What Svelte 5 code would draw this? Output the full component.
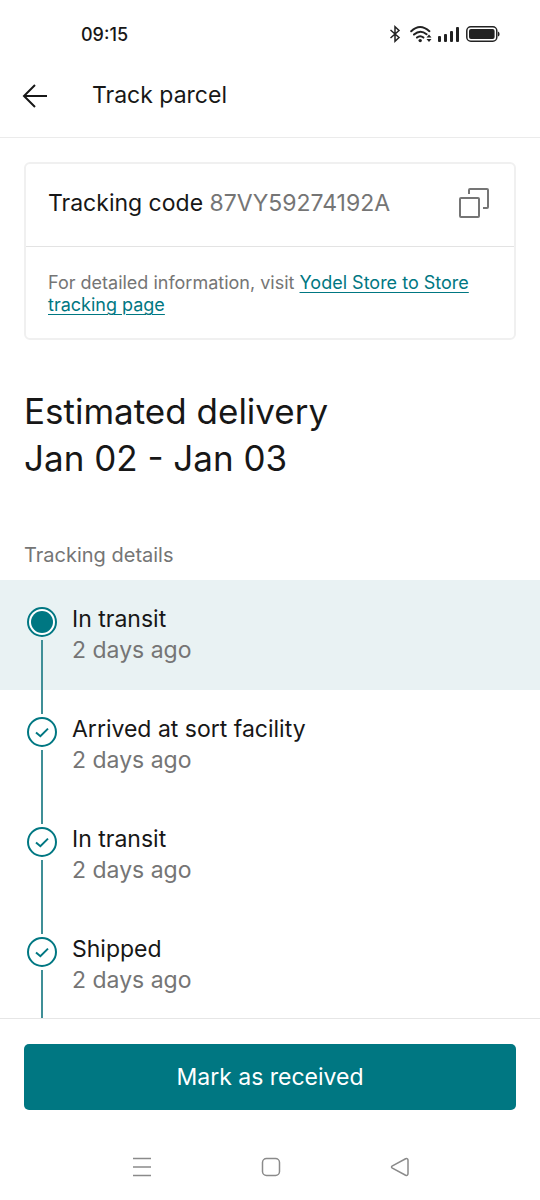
<script>
  let code = $state( '87VY59274192A' );

  let events = $state( [
    { title: 'In transit', when: '2 days ago', current: true },
    { title: 'Arrived at sort facility', when: '2 days ago', current: false },
    { title: 'In transit', when: '2 days ago', current: false },
    { title: 'Shipped', when: '2 days ago', current: false }
  ] );

  function onCopyClick() {
    navigator.clipboard?.writeText( code );
  }
</script>

<div class="screen">
  <div class="status">
    <time>09:15</time>
    <div class="indicators">
      <svg width="16" height="18" viewBox="0 0 16 18">
        <path class="line" d="M2.5 5 L11 12.5 L7 16.2 V1.8 L11 5.5 L2.5 13"></path>
      </svg>
      <svg width="22" height="18" viewBox="0 0 22 18">
        <path class="wave" d="M1.2 6.2 Q10 -2.2 19.4 6.2 M4 9.6 Q10.2 4 16.6 9.2 M7 12.6 Q10.2 9.8 13.4 12.6"></path>
        <circle cx="10.2" cy="15.6" r="1.7"></circle>
        <path d="M19 9.5 L21.5 12.5 H16.5 Z M19 17 L21.5 14 H16.5 Z"></path>
      </svg>
      <svg width="22" height="18" viewBox="0 0 22 18">
        <rect x="0" y="11" width="3" height="6" rx="1"></rect>
        <rect x="6" y="9" width="3" height="8" rx="1"></rect>
        <rect x="12" y="6" width="3" height="11" rx="1"></rect>
        <rect x="18" y="2" width="3" height="15" rx="1"></rect>
      </svg>
      <svg width="34" height="18" viewBox="0 0 34 18">
        <rect class="thin" x="0.8" y="1.8" width="30" height="14.4" rx="4"></rect>
        <rect x="3" y="4" width="25.6" height="10" rx="2"></rect>
        <path d="M32 6.5 Q33.6 7 33.6 9 T32 11.5 Z"></path>
      </svg>
    </div>
  </div>

  <header>
    <button class="icon" type="button" aria-label="Back">
      <svg width="26" height="26" viewBox="0 0 26 26">
        <path class="arrow" d="M25 13 H2 M13 2 L2 13 L13 24"></path>
      </svg>
    </button>
    <h1>Track parcel</h1>
  </header>

  <main>
    <section class="card">
      <div class="code">
        <p>Tracking code <span>{code}</span></p>
        <button class="icon" type="button" aria-label="Copy tracking code" onclick={onCopyClick}>
          <svg width="32" height="32" viewBox="0 0 32 32">
            <rect class="copy" x="1" y="11" width="19" height="19" rx="1"></rect>
            <path class="copy" d="M10 7 V3 Q10 2 11 2 H28 Q29 2 29 3 V20 Q29 21 28 21 H24"></path>
          </svg>
        </button>
      </div>
      <p class="info">For detailed information, visit <a href="#tracking">Yodel Store to Store tracking page</a></p>
    </section>

    <h2>Estimated delivery<br>Jan 02 - Jan 03</h2>

    <h3>Tracking details</h3>

    <ol>
      {#each events as event}
        <li class:current={event.current}>
          <div class="marker">
            <svg width="30" height="30" viewBox="0 0 30 30">
              {#if event.current}
                <circle class="halo" cx="15" cy="15" r="14"></circle>
                <circle class="dot" cx="15" cy="15" r="11"></circle>
              {:else}
                <circle class="ring" cx="15" cy="15" r="14"></circle>
                <path class="ring" d="M9 15.4 L13.4 19.2 L21 11.6"></path>
              {/if}
            </svg>
            <i></i>
          </div>
          <div>
            <p>{event.title}</p>
            <p class="when">{event.when}</p>
          </div>
        </li>
      {/each}
    </ol>
  </main>

  <footer>
    <button class="primary" type="button">Mark as received</button>
  </footer>

  <nav>
    <button class="icon" type="button" aria-label="Recent apps">
      <svg width="20" height="20" viewBox="0 0 20 20">
        <path d="M1 1.5 H19 M1 10 H19 M1 18.5 H19"></path>
      </svg>
    </button>
    <button class="icon" type="button" aria-label="Home">
      <svg width="20" height="20" viewBox="0 0 20 20">
        <rect x="1.5" y="1.5" width="17" height="17" rx="4"></rect>
      </svg>
    </button>
    <button class="icon" type="button" aria-label="Back to previous app">
      <svg width="20" height="20" viewBox="0 0 20 20">
        <path d="M2.4 8.8 L15.6 1.8 Q18 1 18 3.4 V16.6 Q18 19 15.6 18.2 L2.4 11.2 Q0.6 10 2.4 8.8 Z"></path>
      </svg>
    </button>
  </nav>
</div>

<style>
  :global(body) {
    background: #ffffff;
    margin: 0;
  }

  .screen {
    color: #171717;
    display: flex;
    flex-direction: column;
    font-family: Inter, 'Liberation Sans', sans-serif;
    font-size: 23px;
    height: 100vh;
    line-height: 31px;
  }

  h1,
  h2,
  h3,
  p,
  ol {
    font-size: inherit;
    font-weight: 400;
    margin: 0;
    padding: 0;
  }

  svg {
    display: block;
    flex-shrink: 0;
  }

  button {
    border: none;
    cursor: pointer;
    font: inherit;
    margin: 0;
  }

  button.icon {
    background: none;
    padding: 0;
  }

  .status {
    align-items: center;
    display: flex;
    flex-shrink: 0;
    height: 68px;
    justify-content: space-between;
    padding: 0 40px 0 81px;
  }

  .status time {
    font-size: 18px;
    font-weight: 500;
  }

  .indicators {
    align-items: center;
    display: flex;
    gap: 6px;
  }

  .indicators svg {
    fill: #222222;
  }

  .indicators .line,
  .indicators .wave,
  .indicators .thin {
    fill: none;
    stroke: #222222;
    stroke-width: 1.5;
  }

  .indicators .wave {
    stroke-linecap: round;
    stroke-width: 2;
  }

  header {
    align-items: center;
    border-bottom: 1px solid #ebebeb;
    display: flex;
    flex-shrink: 0;
    gap: 44px;
    padding: 12px 22px 26px;
  }

  .arrow {
    fill: none;
    stroke: #171717;
    stroke-width: 2;
  }

  main {
    flex: 1;
    min-height: 0;
    overflow: hidden;
    padding-top: 24px;
  }

  .card {
    border: 2px solid #f0f0f0;
    border-radius: 6px;
    margin: 0 24px;
  }

  .code {
    align-items: center;
    border-bottom: 1px solid #e3e3e3;
    display: flex;
    justify-content: space-between;
    padding: 23px 23px 27px 22px;
  }

  .code span {
    color: #757575;
  }

  .copy {
    fill: none;
    stroke: #757575;
    stroke-width: 2;
  }

  .info {
    color: #757575;
    font-size: 18px;
    line-height: 22px;
    padding: 25px 22px 22px;
  }

  a {
    color: #007782;
    text-decoration-thickness: 1px;
    text-underline-offset: 3px;
  }

  h2 {
    font-size: 35px;
    line-height: 47px;
    padding: 48px 24px 58px;
  }

  h3 {
    color: #757575;
    font-size: 20px;
    line-height: 30px;
    padding: 0 24px 10px;
  }

  ol {
    list-style: none;
  }

  li {
    display: flex;
    gap: 15px;
    height: 86px;
    padding: 24px 24px 0 27px;
  }

  li.current {
    background: #e9f2f3;
  }

  .marker {
    align-items: center;
    display: flex;
    flex-direction: column;
    gap: 3px;
    padding-top: 3px;
  }

  .marker i {
    background: #3f8f97;
    flex: none;
    height: 74px;
    width: 2px;
  }

  .ring {
    fill: none;
    stroke: #007782;
    stroke-width: 2;
  }

  .halo {
    fill: #ffffff;
    stroke: #007782;
    stroke-width: 2;
  }

  .dot {
    fill: #007782;
  }

  .when {
    color: #757575;
  }

  footer {
    border-top: 1px solid #e6e6e6;
    flex-shrink: 0;
    padding: 25px 24px 24px;
  }

  .primary {
    background: #007782;
    border-radius: 5px;
    color: #ffffff;
    display: block;
    height: 66px;
    width: 100%;
  }

  nav {
    display: flex;
    flex-shrink: 0;
    justify-content: space-between;
    padding: 23px 130px 23px 132px;
  }

  nav svg {
    fill: none;
    stroke: #8a8a8a;
    stroke-width: 1.5;
  }
</style>
